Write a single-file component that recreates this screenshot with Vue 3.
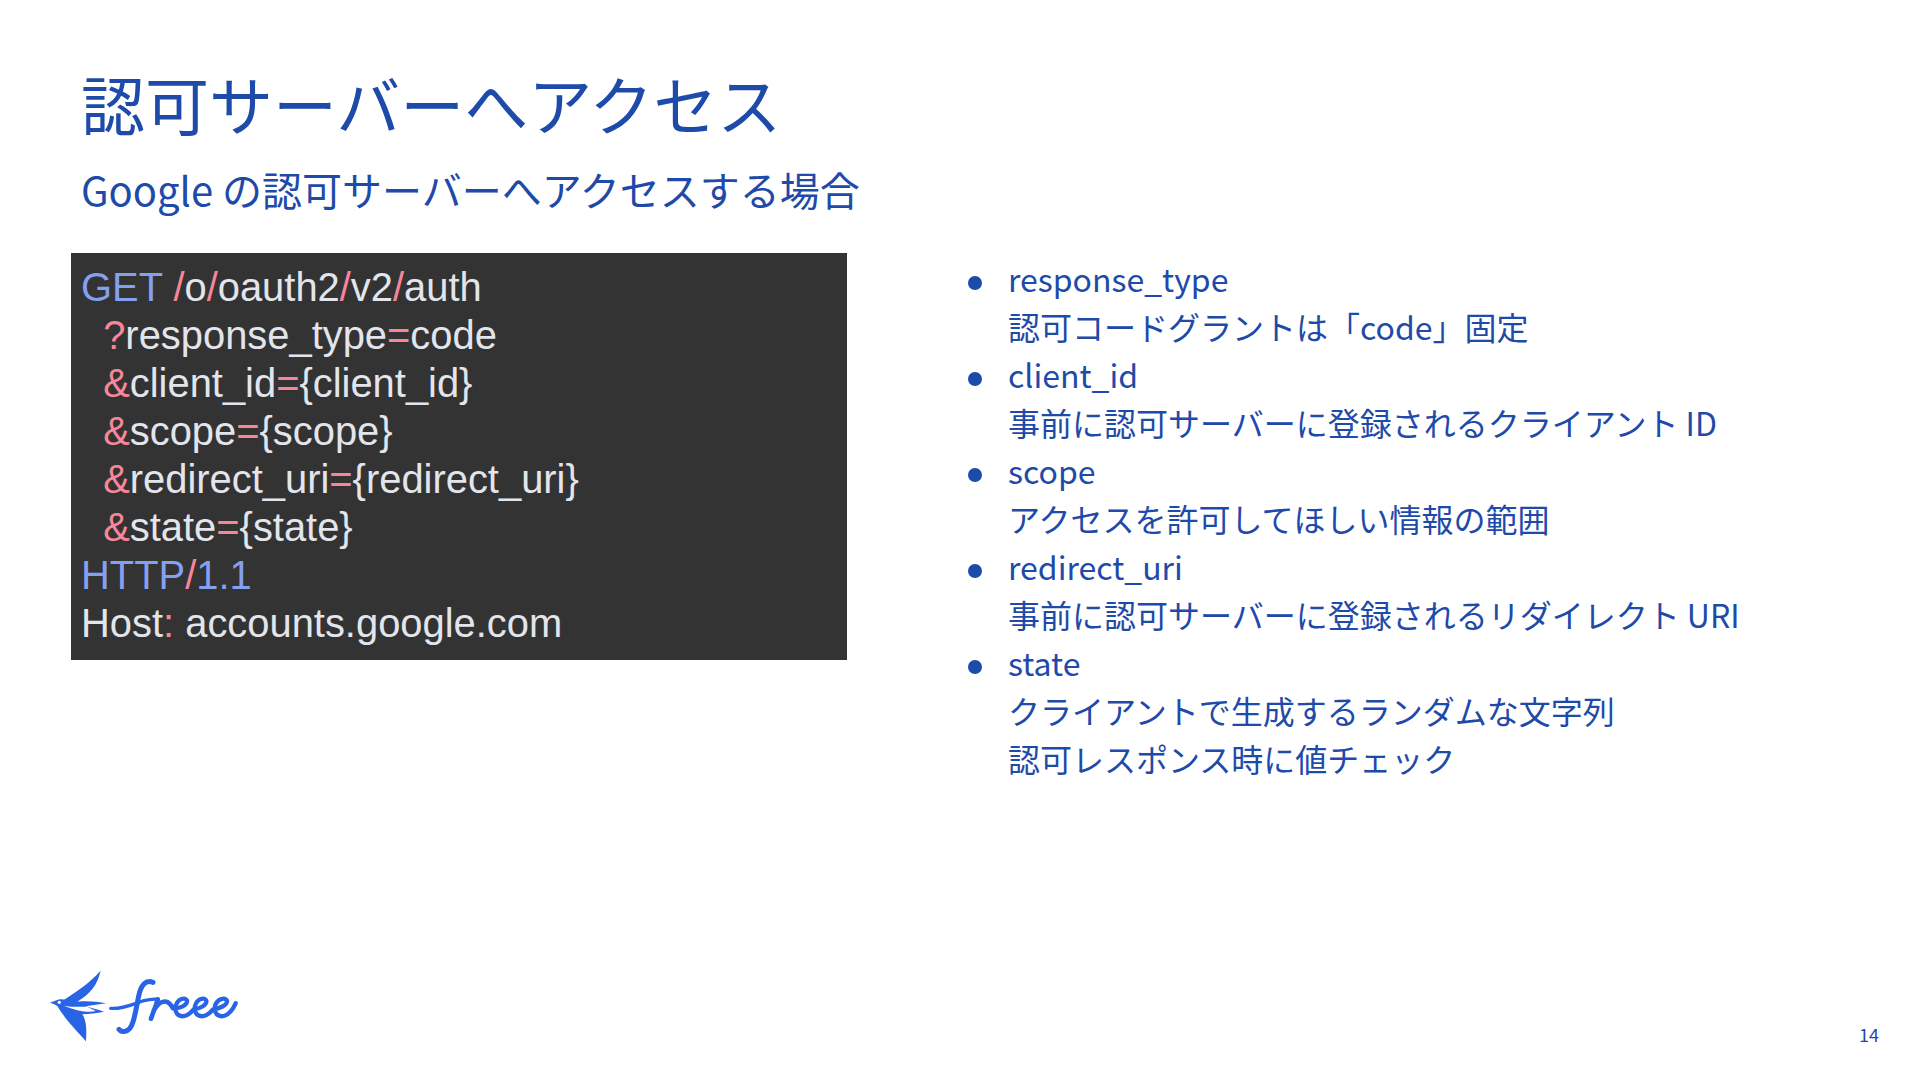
<script setup>
const code = [
  [['b', 'GET'], ['t', ' '], ['r', '/'], ['t', 'o'], ['r', '/'], ['t', 'oauth2'], ['r', '/'], ['t', 'v2'], ['r', '/'], ['t', 'auth']],
  [['t', '  '], ['r', '?'], ['t', 'response_type'], ['r', '='], ['t', 'code']],
  [['t', '  '], ['r', '&'], ['t', 'client_id'], ['r', '='], ['t', '{client_id}']],
  [['t', '  '], ['r', '&'], ['t', 'scope'], ['r', '='], ['t', '{scope}']],
  [['t', '  '], ['r', '&'], ['t', 'redirect_uri'], ['r', '='], ['t', '{redirect_uri}']],
  [['t', '  '], ['r', '&'], ['t', 'state'], ['r', '='], ['t', '{state}']],
  [['b', 'HTTP'], ['r', '/'], ['b', '1.1']],
  [['t', 'Host'], ['r', ':'], ['t', ' accounts.google.com']],
]
const items = [
  ['response_type', '認可コードグラントは「code」固定'],
  ['client_id', '事前に認可サーバーに登録されるクライアント ID'],
  ['scope', 'アクセスを許可してほしい情報の範囲'],
  ['redirect_uri', '事前に認可サーバーに登録されるリダイレクト URI'],
  ['state', 'クライアントで生成するランダムな文字列', '認可レスポンス時に値チェック'],
]
</script>

<template>
  <div class="slide">
    <header class="head">
      <h1 class="title">認可サーバーへアクセス</h1>
      <p class="subtitle">Google の認可サーバーへアクセスする場合</p>
    </header>
    <main class="body">
      <pre class="code"><div v-for="(line, i) in code" :key="i" class="code-line"><span v-for="(s, j) in line" :key="j" :class="s[0]">{{ s[1] }}</span></div></pre>
      <ul class="list">
        <li v-for="it in items" :key="it[0]" class="item">
          <div v-for="l in it" :key="l">{{ l }}</div>
        </li>
      </ul>
    </main>
    <footer class="foot">
      <svg class="logo" viewBox="0 0 720 330" width="240" height="110" aria-label="freee">
        <path fill="#2a64e6" d="M62 158 C75 155 82 150 92 148 C100 148 105 150 110 146 C150 120 185 95 215 62 C205 105 185 130 145 155 C175 152 205 155 232 160 C210 163 190 166 170 169 C190 175 210 180 225 185 C205 190 180 192 160 193 C175 215 172 250 171 274 C150 250 125 225 110 205 C100 190 90 178 85 168 C78 163 70 160 62 158 Z"/>
        <path fill="#fff" d="M105 167 C130 172 155 170 175 170 L200 183 C180 187 150 186 105 167 Z"/>
        <circle cx="91" cy="157" r="5" fill="#fff"/>
        <g fill="none" stroke="#2a64e6" stroke-linecap="round" stroke-linejoin="round">
          <path stroke-width="10" d="M245 175 C285 178 315 160 345 152 C360 148 375 146 388 148"/>
          <path stroke-width="15" d="M372 97 C350 88 336 105 329 138 C322 172 318 205 308 226 C298 248 276 248 270 238"/>
          <path stroke-width="14" d="M386 148 C380 170 372 188 366 206 M374 182 C384 164 398 152 412 155 C422 157 426 166 432 174"/>
          <path stroke-width="13" d="M432 174 C452 176 476 166 474 152 C470 140 446 146 440 168 C436 188 448 202 466 198 C478 195 486 188 494 178 C512 176 534 166 532 152 C528 140 504 146 498 168 C494 188 506 202 524 198 C536 195 544 188 552 178 C570 176 596 166 594 152 C590 140 564 146 558 168 C554 188 566 202 584 198 C599 194 612 178 620 160"/>
        </g>
      </svg>
      <span class="page">14</span>
    </footer>
  </div>
</template>

<style>
html, body { margin: 0; background: #fff; }
</style>

<style scoped>
.slide {
  width: 1920px;
  height: 1080px;
  box-sizing: border-box;
  display: flex;
  flex-direction: column;
  padding: 0 0 0 71px;
  background: #fff;
  color: #1e4aa9;
  font-family: "Noto Sans CJK JP", "Noto Sans", sans-serif;
  overflow: hidden;
}
.head { padding: 58px 0 0 10px; }
.title {
  margin: 0;
  font-size: 64px;
  line-height: 88px;
  font-weight: 400;
}
.subtitle {
  margin: 13px 0 0;
  font-size: 40px;
  line-height: 60px;
  font-weight: 400;
}
.body {
  display: flex;
  align-items: flex-start;
  margin-top: 34px;
}
.code {
  box-sizing: border-box;
  width: 776px;
  height: 407px;
  margin: 0;
  padding: 10px 0 0 10px;
  background: #333333;
  font-family: "Liberation Sans", Arial, sans-serif;
  font-size: 39.9px;
  line-height: 48px;
}
.code-line { height: 48px; }
.t { color: #e2e5ec; }
.r { color: #f8869b; }
.b { color: #85a0f0; }
.list {
  list-style: none;
  margin: 1px 0 0 161px;
  padding: 0;
  font-size: 32px;
  line-height: 48px;
}
.item {
  position: relative;
}
.item::before {
  content: "";
  position: absolute;
  left: -40px;
  top: 22px;
  width: 14px;
  height: 14px;
  border-radius: 50%;
  background: #1e4aa9;
}
.foot {
  margin-top: auto;
  display: flex;
  justify-content: space-between;
  align-items: flex-end;
  padding: 0 41px 20px 0;
}
.logo { display: block; margin: 0 0 0 -42px; }
.page {
  font-size: 18px;
  line-height: 26px;
  margin-bottom: 13px;
}
</style>
